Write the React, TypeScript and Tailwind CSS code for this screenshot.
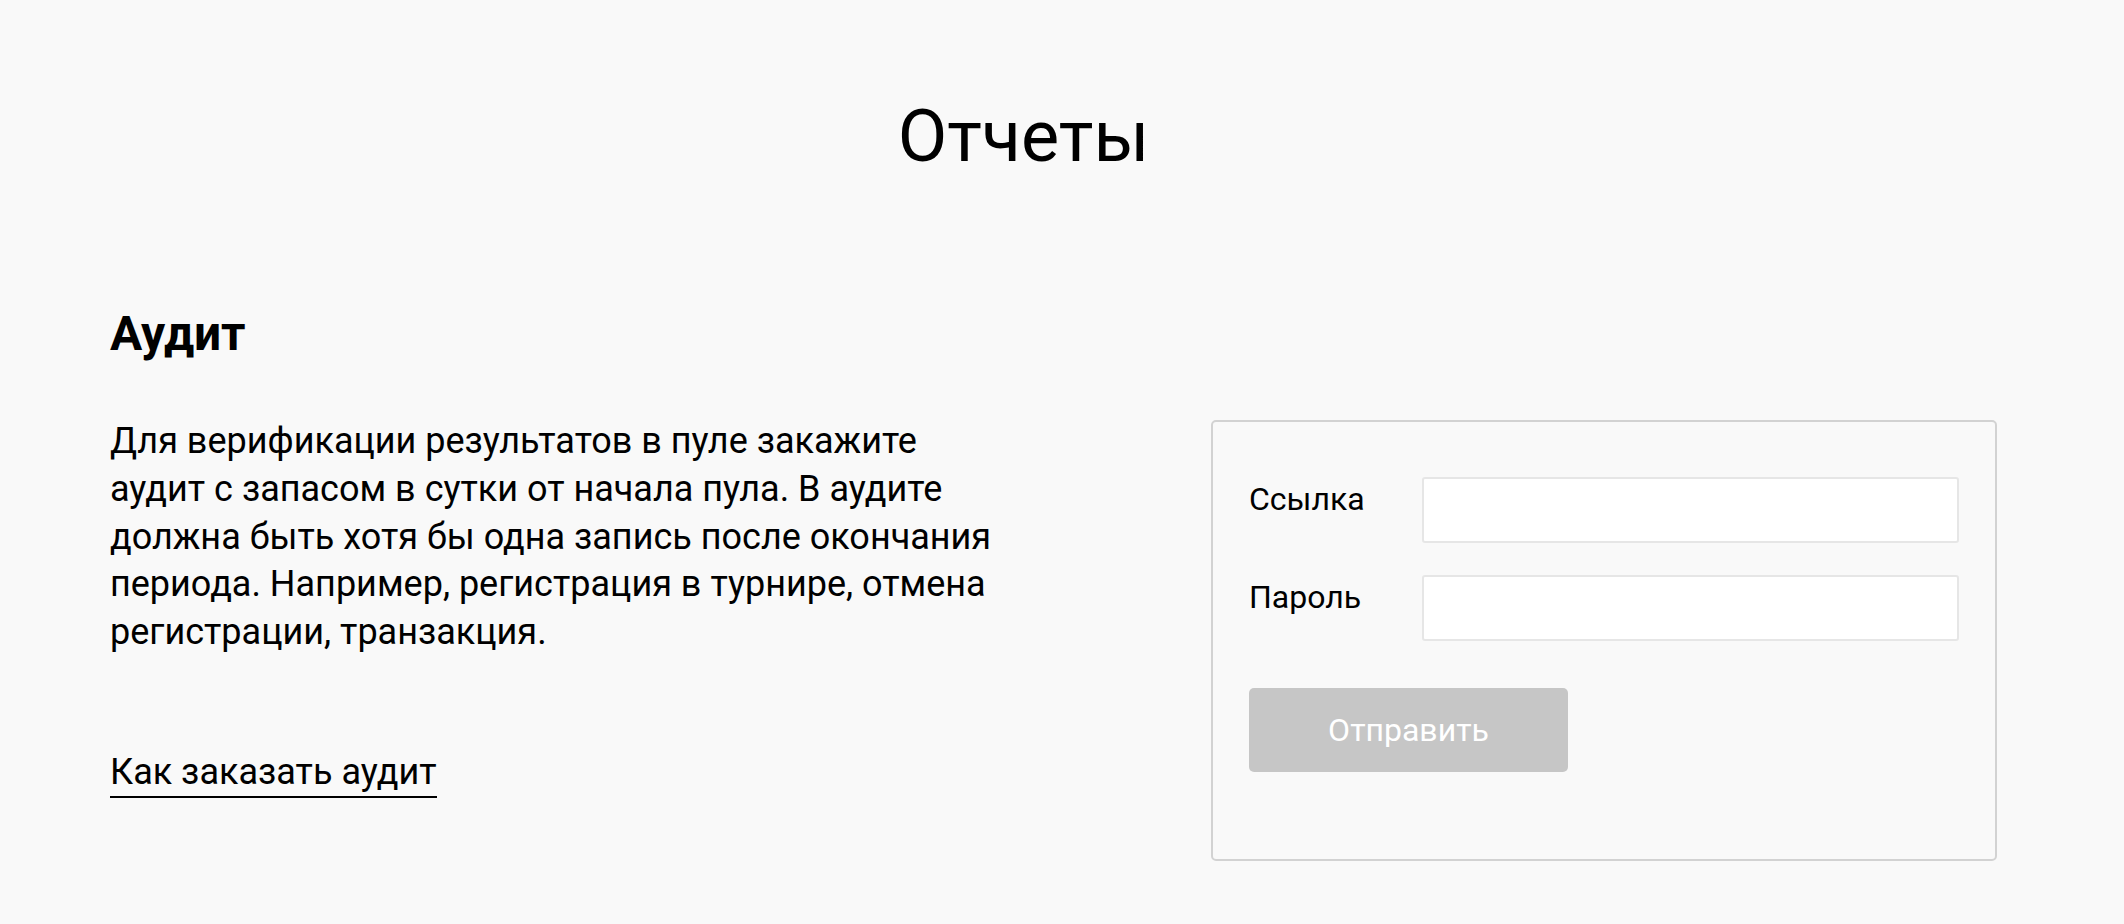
import React from 'react';

const App: React.FC = () => {
  return (
    <div className="min-h-screen bg-[#f9f9f9] text-black font-['Roboto','Noto_Sans',sans-serif]">
      <h1 className="pt-[101px] pr-[77px] text-center text-[72px] leading-[72px] font-normal">Отчеты</h1>

      <div className="pl-[110px] pr-[127px]">
        <h2 className="mt-[137px] text-[48px] leading-[48px] font-bold">Аудит</h2>

        <div className="mt-[62px] flex justify-between items-start">
          <div className="w-[890px] -mt-[2px]">
            <p className="text-[36px] leading-[47.75px]">
              Для верификации результатов в пуле закажите аудит с запасом в сутки от начала пула. В аудите должна быть
              хотя бы одна запись после окончания периода. Например, регистрация в турнире, отмена регистрации,
              транзакция.
            </p>
            <a href="#" className="mt-[91px] inline-block border-b-2 border-black text-[36px] leading-[48px]">
              Как заказать аудит
            </a>
          </div>

          <form className="w-[786px] h-[441px] border-2 border-[#d2d2d2] rounded-[5px] px-[36px] pt-[55px]">
            <div className="grid grid-cols-[173px_1fr] gap-y-[32px]">
              <label className="text-[32px] leading-[44px]">Ссылка</label>
              <input type="text" className="h-[66px] bg-white border-2 border-[#e6e6e6] rounded-[3px] outline-none" />
              <label className="text-[32px] leading-[44px]">Пароль</label>
              <input type="password" className="h-[66px] bg-white border-2 border-[#e6e6e6] rounded-[3px] outline-none" />
            </div>
            <button
              type="button"
              className="mt-[47px] w-[319px] h-[84px] bg-[#c6c6c6] rounded-[5px] text-white text-[32px]"
            >
              Отправить
            </button>
          </form>
        </div>
      </div>
    </div>
  );
};

export default App;
